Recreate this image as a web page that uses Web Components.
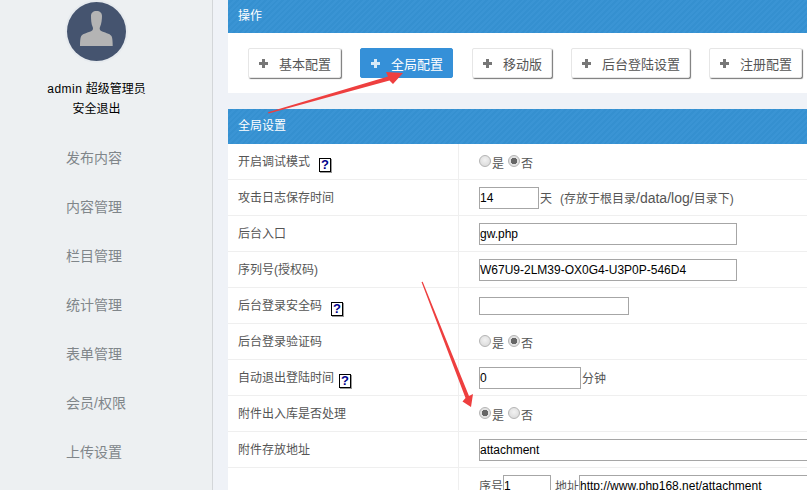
<!DOCTYPE html>
<html>
<head>
<meta charset="utf-8">
<style>
    html, body { margin: 0; height: 490px; overflow: hidden; }
    body {
        display: flex;
        position: relative;
        background: #eff2f7;
        font: 12px "Liberation Sans", "Noto Sans CJK SC", sans-serif;
        color: #555;
    }
</style>
</head>
<body>
<x-sidebar>
    <x-nav-item>发布内容</x-nav-item>
    <x-nav-item>内容管理</x-nav-item>
    <x-nav-item>栏目管理</x-nav-item>
    <x-nav-item>统计管理</x-nav-item>
    <x-nav-item>表单管理</x-nav-item>
    <x-nav-item>会员/权限</x-nav-item>
    <x-nav-item>上传设置</x-nav-item>
</x-sidebar>
<x-main>
    <x-panel heading="操作" style="--head: 33px">
        <x-toolbar>
            <x-btn>基本配置</x-btn>
            <x-btn active>全局配置</x-btn>
            <x-btn>移动版</x-btn>
            <x-btn>后台登陆设置</x-btn>
            <x-btn>注册配置</x-btn>
        </x-toolbar>
    </x-panel>
    <x-panel heading="全局设置" style="--head: 35px">
        <x-row><span slot="label">开启调试模式<x-help></x-help></span><x-radios value="否"></x-radios></x-row>
        <x-row><span slot="label">攻击日志保存时间</span><x-input width="60">14</x-input><x-note>天</x-note><x-note style="margin-left:8px">(存放于根目录<span style="font-size:14px">/data/log/</span>目录下)</x-note></x-row>
        <x-row><span slot="label">后台入口</span><x-input width="258">gw.php</x-input></x-row>
        <x-row><span slot="label">序列号(授权码)</span><x-input width="258">W67U9-2LM39-OX0G4-U3P0P-546D4</x-input></x-row>
        <x-row><span slot="label">后台登录安全码<x-help></x-help></span><x-input width="150" height="18"></x-input></x-row>
        <x-row><span slot="label">后台登录验证码</span><x-radios value="否"></x-radios></x-row>
        <x-row><span slot="label">自动退出登陆时间<x-help style="margin-left:5px"></x-help></span><x-input width="102">0</x-input><x-note>分钟</x-note></x-row>
        <x-row><span slot="label">附件出入库是否处理</span><x-radios value="是"></x-radios></x-row>
        <x-row><span slot="label">附件存放地址</span><x-input width="400">attachment</x-input></x-row>
        <x-row><span slot="label"></span><x-note style="margin:0">序号</x-note><x-input width="48">1</x-input><x-note style="margin-left:4px">地址</x-note><x-input width="400">http://www.php168.net/attachment</x-input></x-row>
    </x-panel>
</x-main>
<x-arrows></x-arrows>

<script>
class Sidebar extends HTMLElement {
    constructor() {
        super();
        this.attachShadow({mode: 'open'});
        this.shadowRoot.innerHTML = `
            <style>
                :host {
                    display: flex;
                    flex-direction: column;
                    align-items: center;
                    box-sizing: border-box;
                    flex: 0 0 213px;
                    height: 490px;
                    background: #edf0f2;
                    border-right: 1px solid #d3d6d9;
                    color: #000;
                    padding-top: 2px;
                }
                #avatar {
                    width: 59px;
                    height: 59px;
                    border-radius: 50%;
                    background: #45546f;
                    box-shadow: 0 0 0 2px #e6eaee;
                    margin-left: -19px;
                }
                #avatar svg { display: block; }
                #user {
                    margin: 18px 0 0 -19px;
                    text-align: center;
                    line-height: 20px;
                }
                #user span { letter-spacing: .5px; }
                nav {
                    align-self: stretch;
                    display: flex;
                    flex-direction: column;
                    padding: 15px 0 0 66px;
                }
            </style>
            <div id="avatar">
                <svg width="59" height="59" viewBox="0 0 59 59">
                    <path fill="#b4b4b4" d="M24 14c0-3 2-5 5.500-5s5.500 2 5.500 5c0 3-.5 8-2 11-.6 1.300-.4 3 .8 3.700 3.500 2 9 2.600 10.700 5.300 1 1.700 1.200 6 1.200 10H13c0-4 .2-8.300 1.200-10 1.700-2.700 7.200-3.300 10.700-5.300 1.200-.7 1.400-2.400.8-3.700-1.500-3-1.700-8-1.700-11z"/>
                </svg>
            </div>
            <div id="user"><span>admin</span> 超级管理员<br>安全退出</div>
            <nav><slot></slot></nav>
        `;
    }
}

class NavItem extends HTMLElement {
    constructor() {
        super();
        this.attachShadow({mode: 'open'});
        this.shadowRoot.innerHTML = `
            <style>
                :host {
                    display: block;
                    height: 49px;
                    line-height: 49px;
                    font-size: 14px;
                    color: #80868a;
                }
            </style>
            <slot></slot>
        `;
    }
}

class Main extends HTMLElement {
    constructor() {
        super();
        this.attachShadow({mode: 'open'});
        this.shadowRoot.innerHTML = `
            <style>
                :host {
                    display: flex;
                    flex-direction: column;
                    gap: 16px;
                    flex: 1;
                    min-width: 0;
                    height: 490px;
                    overflow: hidden;
                    padding-left: 15px;
                }
            </style>
            <slot></slot>
        `;
    }
}

class Panel extends HTMLElement {
    constructor() {
        super();
        this.attachShadow({mode: 'open'});
        this.shadowRoot.innerHTML = `
            <style>
                :host {
                    display: block;
                    background: #fff;
                    width: 700px;
                    flex: none;
                }
                header {
                    box-sizing: border-box;
                    height: var(--head);
                    line-height: var(--head);
                    padding-left: 10px;
                    color: #fff;
                    background: repeating-linear-gradient(135deg, #3a94d4 0, #3a94d4 2px, #3590d0 2px, #3590d0 4px);
                }
            </style>
            <header id="title"></header>
            <slot></slot>
        `;
    }

    connectedCallback() {
        this.shadowRoot.querySelector('#title').textContent = this.getAttribute('heading');
    }
}

class Toolbar extends HTMLElement {
    constructor() {
        super();
        this.attachShadow({mode: 'open'});
        this.shadowRoot.innerHTML = `
            <style>
                :host {
                    display: flex;
                    gap: 19px;
                    box-sizing: border-box;
                    height: 60px;
                    padding: 15px 0 0 20px;
                }
            </style>
            <slot></slot>
        `;
    }
}

class Btn extends HTMLElement {
    constructor() {
        super();
        this.attachShadow({mode: 'open'});
        this.shadowRoot.innerHTML = `
            <style>
                :host {
                    display: flex;
                    align-items: center;
                    flex: none;
                    box-sizing: border-box;
                    height: 30px;
                    padding: 0 9px 0 10px;
                    font-size: 13px;
                    color: #555;
                    background: #fff;
                    border: 1px solid #e6e6e6;
                    border-radius: 2px;
                    box-shadow: 1px 1px 1px #777;
                }
                :host([active]) {
                    color: #fff;
                    background: #3590d8;
                    border-color: #3590d8;
                    box-shadow: none;
                }
                svg { margin-right: 11px; }
            </style>
            <svg width="9" height="9" viewBox="0 0 9 9"><path fill="currentColor" opacity=".8" d="M3 0h3v3h3v3H6v3H3V6H0V3h3z"/></svg>
            <slot></slot>
        `;
    }
}

class Row extends HTMLElement {
    constructor() {
        super();
        this.attachShadow({mode: 'open'});
        this.shadowRoot.innerHTML = `
            <style>
                :host {
                    display: grid;
                    grid-template-columns: 231px 1fr;
                    box-sizing: border-box;
                    height: 36px;
                    border-bottom: 1px solid #efefef;
                }
                #label {
                    display: flex;
                    align-items: center;
                    padding: 0 0 2px 10px;
                    border-right: 1px solid #efefef;
                }
                #value {
                    display: flex;
                    align-items: center;
                    padding-left: 20px;
                }
            </style>
            <div id="label"><slot name="label"></slot></div>
            <div id="value"><slot></slot></div>
        `;
    }
}

class Help extends HTMLElement {
    constructor() {
        super();
        this.attachShadow({mode: 'open'});
        this.shadowRoot.innerHTML = `
            <style>
                :host {
                    display: inline-block;
                    box-sizing: border-box;
                    width: 12px;
                    height: 14px;
                    margin: -4px 0 -4px 9px;
                    vertical-align: -3px;
                    border: 1px solid #000;
                    box-shadow: 1px 1px 0 #999;
                    background: #fff;
                    color: #00008b;
                    font: bold 13px/12px "Liberation Sans", sans-serif;
                    text-align: center;
                }
            </style>
            ?
        `;
    }
}

class Radios extends HTMLElement {
    constructor() {
        super();
        this.attachShadow({mode: 'open'});
        this.shadowRoot.innerHTML = `
            <style>
                :host { display: flex; align-items: center; }
                .dot {
                    box-sizing: border-box;
                    width: 12px;
                    height: 12px;
                    margin-top: -2px;
                    border-radius: 50%;
                    border: 1px solid #b4b4b4;
                    background: radial-gradient(circle at 50% 40%, #f2f2f2, #d6d6d6);
                }
                .dot.on { background: radial-gradient(circle, #666 0 3px, #e2e2e2 3.500px); }
                span { margin-right: 4px; padding-top: 2px; margin-left: 1px; }
            </style>
            <div class="dot" id="a"></div><span>是</span>
            <div class="dot" id="b"></div><span>否</span>
        `;
    }

    connectedCallback() {
        const id = this.getAttribute('value') === '是' ? '#a' : '#b';
        this.shadowRoot.querySelector(id).classList.add('on');
    }
}

class Input extends HTMLElement {
    constructor() {
        super();
        this.attachShadow({mode: 'open'});
        this.shadowRoot.innerHTML = `
            <style>
                :host {
                    display: block;
                    flex: none;
                    box-sizing: border-box;
                    height: 22px;
                    line-height: 20px;
                    border: 1px solid #a6a6a6;
                    background: #fff;
                    color: #000;
                    white-space: nowrap;
                    overflow: hidden;
                }
            </style>
            <slot></slot>
        `;
    }

    connectedCallback() {
        this.style.width = this.getAttribute('width') + 'px';
        if(this.hasAttribute('height')) {
            this.style.height = this.getAttribute('height') + 'px';
        }
    }
}

class Note extends HTMLElement {
    constructor() {
        super();
        this.attachShadow({mode: 'open'});
        this.shadowRoot.innerHTML = `
            <style>
                :host { display: block; flex: none; margin-left: 1px; color: #555; }
            </style>
            <slot></slot>
        `;
    }
}

class Arrows extends HTMLElement {
    constructor() {
        super();
        this.attachShadow({mode: 'open'});
        this.shadowRoot.innerHTML = `
            <style>
                :host { position: absolute; left: 0; top: 0; pointer-events: none; }
                svg { display: block; }
            </style>
            <svg width="807" height="490" viewBox="0 0 807 490">
                <path fill="#ee3f3f" d="M268 112.300L388 76.500 386 72 403 73 393 84 389.500 80.500 268.500 113.500z"/>
                <path fill="#ee3f3f" d="M421.500 282L422.700 281.700 469 396 473 394 471 407 462.500 401.500 465.500 398z"/>
            </svg>
        `;
    }
}

customElements.define('x-sidebar', Sidebar);
customElements.define('x-nav-item', NavItem);
customElements.define('x-main', Main);
customElements.define('x-panel', Panel);
customElements.define('x-toolbar', Toolbar);
customElements.define('x-btn', Btn);
customElements.define('x-row', Row);
customElements.define('x-help', Help);
customElements.define('x-radios', Radios);
customElements.define('x-input', Input);
customElements.define('x-note', Note);
customElements.define('x-arrows', Arrows);
</script>
</body>
</html>
